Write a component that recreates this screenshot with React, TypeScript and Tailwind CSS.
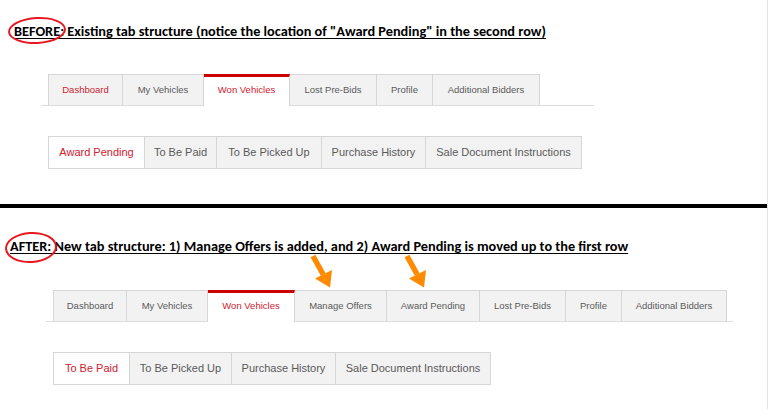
import React from "react";

type Tab = { label: string; w: number; active?: boolean; red?: boolean };

const beforeTop: Tab[] = [
  { label: "Dashboard", w: 75, red: true },
  { label: "My Vehicles", w: 81 },
  { label: "Won Vehicles", w: 86, active: true },
  { label: "Lost Pre-Bids", w: 87 },
  { label: "Profile", w: 56 },
  { label: "Additional Bidders", w: 107 },
];

const beforeSub: Tab[] = [
  { label: "Award Pending", w: 95, active: true },
  { label: "To Be Paid", w: 72 },
  { label: "To Be Picked Up", w: 105 },
  { label: "Purchase History", w: 104 },
  { label: "Sale Document Instructions", w: 156 },
];

const afterTop: Tab[] = [
  { label: "Dashboard", w: 74 },
  { label: "My Vehicles", w: 81 },
  { label: "Won Vehicles", w: 87, active: true },
  { label: "Manage Offers", w: 92 },
  { label: "Award Pending", w: 93 },
  { label: "Lost Pre-Bids", w: 86 },
  { label: "Profile", w: 56 },
  { label: "Additional Bidders", w: 105 },
];

const afterSub: Tab[] = [
  { label: "To Be Paid", w: 75, active: true },
  { label: "To Be Picked Up", w: 102 },
  { label: "Purchase History", w: 104 },
  { label: "Sale Document Instructions", w: 155 },
];

const tabFont = { fontFamily: '"Liberation Sans", Arial, sans-serif' };
const noteFont = {
  fontFamily: 'Carlito, Calibri, "Liberation Sans Narrow", "Arial Narrow", Roboto, sans-serif',
};

function TopTabs({ tabs }: { tabs: Tab[] }) {
  return (
    <div className="flex items-end">
      {tabs.map((t, i) => (
        <div
          key={t.label}
          style={{ width: t.w, ...tabFont }}
          className={`flex h-[31px] items-center justify-center text-[9.5px] border-r border-[#d6d6d6] ${
            i === 0 ? "border-l" : ""
          } ${
            t.active
              ? "bg-white border-t-[3px] border-t-[#cc0000] -mb-px h-[32px] text-[#d0202e]"
              : `bg-[#f2f2f2] border-t ${t.red ? "text-[#cc2233]" : "text-[#5a5a5a]"}`
          }`}
        >
          <span className={t.active ? "-mt-[2px]" : ""}>{t.label}</span>
        </div>
      ))}
    </div>
  );
}

function SubTabs({ tabs }: { tabs: Tab[] }) {
  return (
    <div className="inline-flex border border-[#d6d6d6]">
      {tabs.map((t, i) => (
        <div
          key={t.label}
          style={{ width: t.w, ...tabFont }}
          className={`flex h-[31px] items-center justify-center text-[11px] ${
            i > 0 ? "border-l border-[#d6d6d6]" : ""
          } ${t.active ? "bg-white text-[#d0202e]" : "bg-[#f2f2f2] text-[#5a5a5a]"}`}
        >
          {t.label}
        </div>
      ))}
    </div>
  );
}

function Arrow({ left }: { left: number }) {
  return (
    <svg
      className="absolute top-[253px]"
      style={{ left }}
      width="26"
      height="36"
      viewBox="0 0 26 36"
    >
      <line x1="4" y1="3" x2="14.2" y2="21.5" stroke="#ff8a00" strokeWidth="5.5" />
      <polygon points="21,34.5 23,17 6,25.5" fill="#ff8a00" />
    </svg>
  );
}

export default function App() {
  return (
    <div className="relative w-[768px] h-[409px] overflow-hidden bg-white border-r border-[#e2e2e2]">
      {/* Before */}
      <section className="h-[204px] pt-[22px]">
        <p
          style={noteFont}
          className="pl-[14px] text-[14.3px] leading-[18px] font-bold text-black underline underline-offset-2"
        >
          BEFORE: Existing tab structure (notice the location of "Award Pending" in the second row)
        </p>
        <div className="ml-[41px] mt-[34px] w-[553px] pl-[7px] border-b border-[#dcdcdc]">
          <TopTabs tabs={beforeTop} />
        </div>
        <div className="ml-[48px] mt-[30px]">
          <SubTabs tabs={beforeSub} />
        </div>
      </section>

      <div className="h-[4px] bg-black" />

      {/* After */}
      <section className="pt-[29px]">
        <p
          style={noteFont}
          className="pl-[10px] text-[14.3px] leading-[18px] font-bold text-black underline underline-offset-2"
        >
          AFTER: New tab structure: 1) Manage Offers is added, and 2) Award Pending is moved up to the first row
        </p>
        <div className="ml-[46px] mt-[35px] w-[687px] pl-[7px] border-b border-[#dcdcdc]">
          <TopTabs tabs={afterTop} />
        </div>
        <div className="ml-[53px] mt-[30px]">
          <SubTabs tabs={afterSub} />
        </div>
      </section>

      {/* hand-drawn circles */}
      <div className="absolute left-[8px] top-[17px] w-[58px] h-[27px] rounded-[50%] border-2 border-[#e8161e] -rotate-3" />
      <div className="absolute left-[5px] top-[232px] w-[52px] h-[31px] rounded-[50%] border-2 border-[#e8161e] -rotate-3" />

      <Arrow left={309} />
      <Arrow left={403} />
    </div>
  );
}
